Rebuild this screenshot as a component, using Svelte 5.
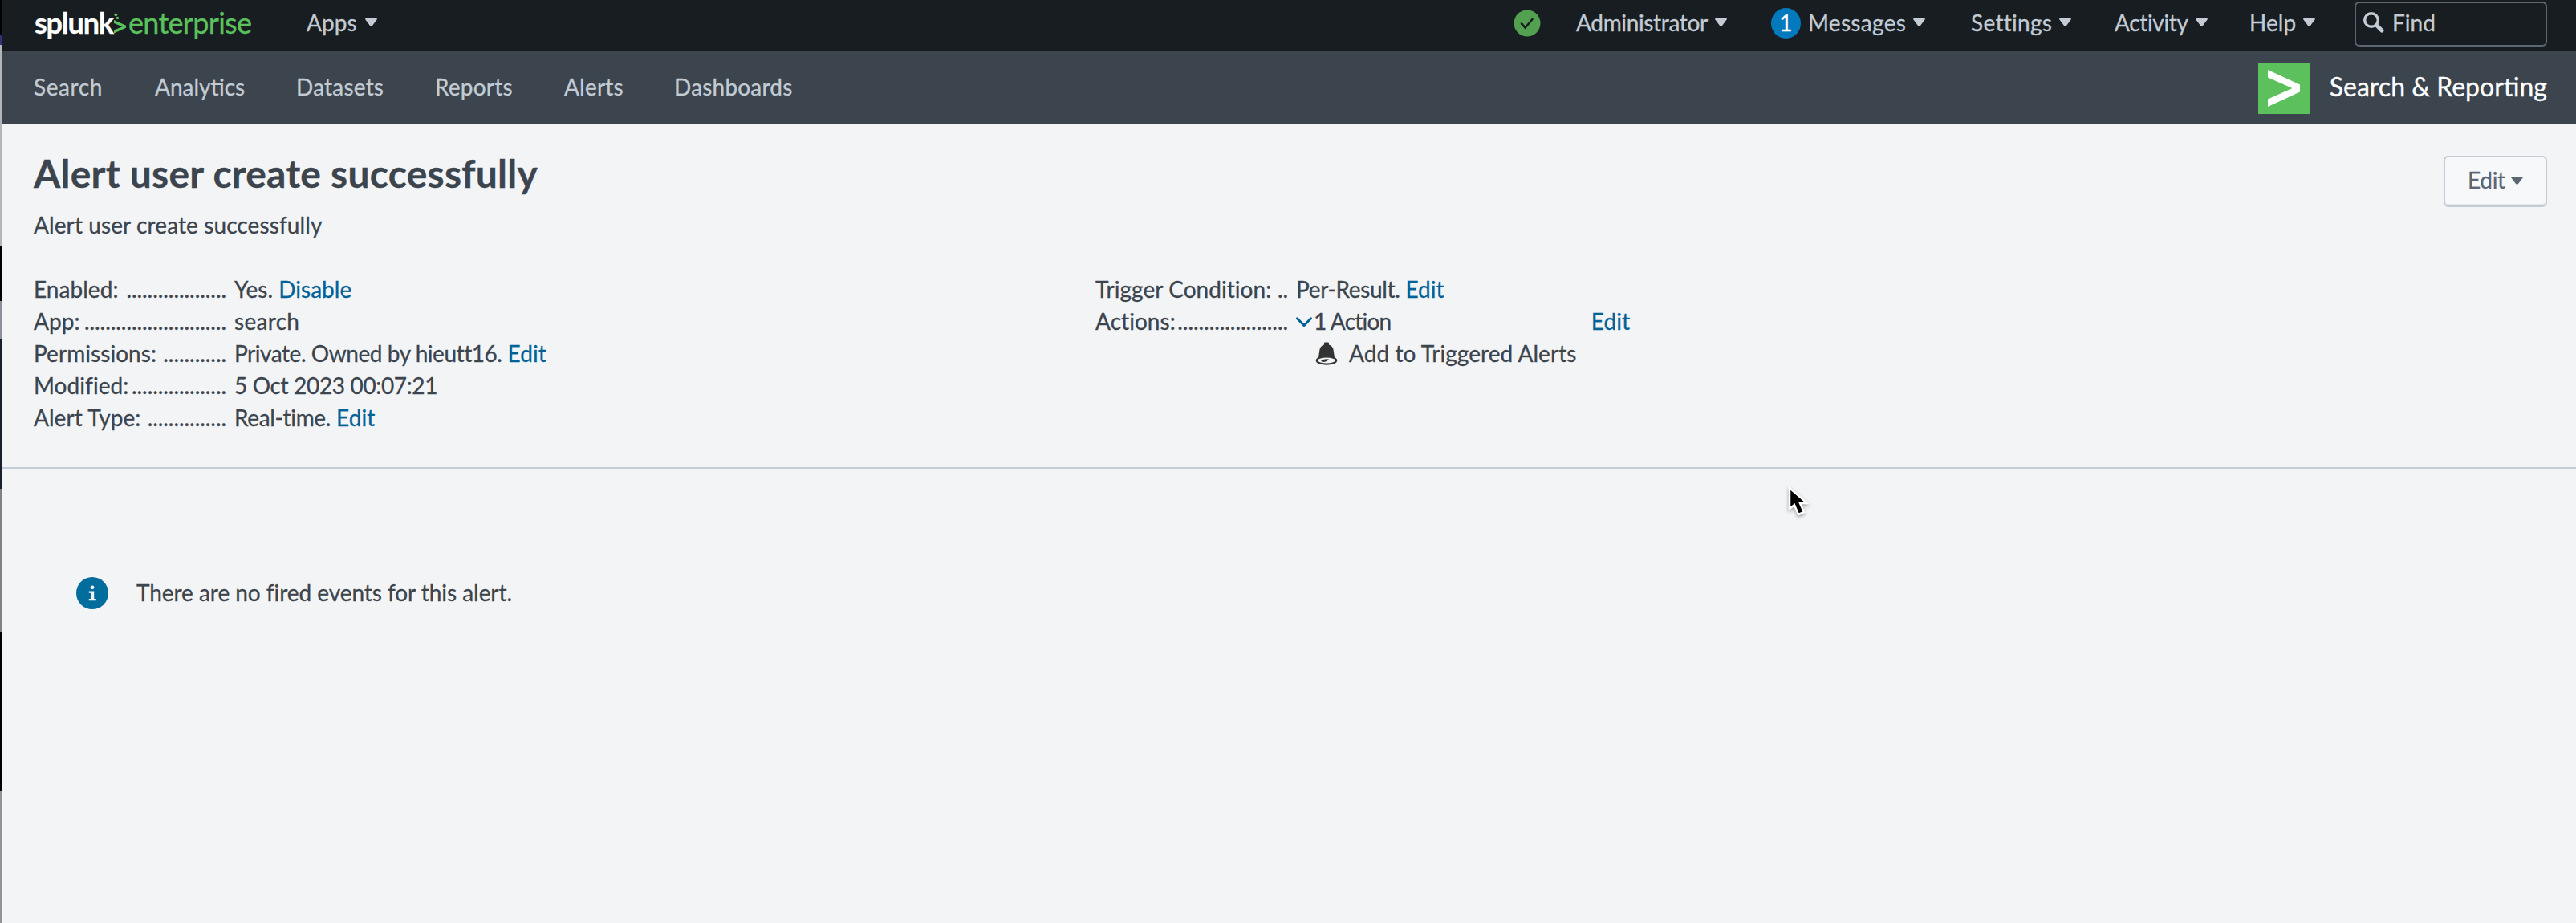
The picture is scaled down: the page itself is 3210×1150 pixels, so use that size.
<script>
  const menus = [
    { label: 'Administrator', cls: 'tighter' },
    { label: 'Messages', badge: 1, cls: 'loose' },
    { label: 'Settings', cls: 'loose' },
    { label: 'Activity', cls: 'tighter' },
    { label: 'Help' },
  ];
  const nav = ['Search', 'Analytics', 'Datasets', 'Reports', 'Alerts', 'Dashboards'];
  const leader = (n) => '.'.repeat(n);
  const details = [
    { label: 'Enabled:', dots: 19, value: 'Yes.', link: 'Disable' },
    { label: 'App:', dots: 27, value: 'search', cls: 'loose' },
    { label: 'Permissions:', dots: 12, value: 'Private. Owned by hieutt16.', link: 'Edit', cls: 'tightest' },
    { label: 'Modified:', dots: 18, value: '5 Oct 2023 00:07:21', cls: 'tighter' },
    { label: 'Alert Type:', dots: 15, value: 'Real-time.', link: 'Edit', cls: 'tighter' },
  ];
</script>

{#snippet caret()}
  <svg class="caret" viewBox="0 0 15 10"><path d="M1 0h13q1.500 0 .600 1.500L9 9q-1.500 1.600-3 0L.400 1.500Q-.500 0 1 0z" /></svg>
{/snippet}

<div class="window">
  <header class="topbar">
    <div class="logo">
      <span class="splunk">splunk</span>
      <svg class="prompt" viewBox="0 0 15 26">
        <path d="M0 9l15 6.800v3L0 25.500v-4l10.500-4.200L0 13z" />
        <circle cx="2.300" cy="2.300" r="1.900" /><circle cx="4.500" cy="6.500" r="1.700" />
      </svg>
      <span class="enterprise">enterprise</span>
    </div>
    <div class="menu apps"><span>Apps</span>{@render caret()}</div>
    <div class="tools">
      <svg class="health" viewBox="0 0 34 34">
        <circle cx="17" cy="17" r="16.500" />
        <path d="M10 17.500l4.600 5L23.500 12" />
      </svg>
      {#each menus as m}
        <div class="menu">
          {#if m.badge}<b class="badge">{m.badge}</b>{/if}
          <span class={m.cls}>{m.label}</span>{@render caret()}
        </div>
      {/each}
      <div class="find">
        <svg viewBox="0 0 26 26"><circle cx="10" cy="10" r="8.300" /><path d="M17 17l6 6" /></svg>
        <span>Find</span>
      </div>
    </div>
  </header>

  <nav class="appbar">
    <div class="links">
      {#each nav as item}<span>{item}</span>{/each}
    </div>
    <div class="app">
      <svg viewBox="0 0 64 64"><path d="M12 9l40 18.500v9L12 55v-9.500L42.500 32 12 18.500z" /></svg>
      <span>Search &amp; Reporting</span>
    </div>
  </nav>

  <main>
    <section class="summary">
      <div class="heading">
        <div>
          <h1>Alert user create successfully</h1>
          <p>Alert user create successfully</p>
        </div>
        <button>Edit{@render caret()}</button>
      </div>
      <div class="columns">
        <div class="details">
          {#each details as d}
            <div class="row">
              <div class="label">{d.label}<i>{leader(d.dots)}</i></div>
              <div><span class={d.cls}>{d.value}</span>{#if d.link}<a href="#edit">{d.link}</a>{/if}</div>
            </div>
          {/each}
        </div>
        <div class="details">
          <div class="row">
            <div class="label">Trigger Condition:<i>{leader(2)}</i></div>
            <div><span class="tighter">Per-Result.</span><a href="#edit">Edit</a></div>
          </div>
          <div class="row">
            <div class="label">Actions:<i>{leader(21)}</i></div>
            <div class="actions">
              <svg class="chevron" viewBox="0 0 20 14"><path d="M1.500 1.800L10 10.500l8.500-8.700" /></svg>
              <span class="one">1 Action</span>
              <a href="#edit">Edit</a>
            </div>
          </div>
          <div class="row triggered">
            <svg class="bell" viewBox="0 0 28 29">
              <path class="body" d="M11 3.500V1.500Q11 .500 12 .500h4Q17 .500 17 1.500V3.500Q22 4.800 22.700 10.500L24 19.500 27 23H1l3-3.500L5.300 10.500Q6 4.800 11 3.500z" />
              <ellipse class="rim" cx="14" cy="23" rx="12.200" ry="4.600" />
              <path class="body" d="M7 23Q12 20.500 17 21.500 14 25.500 8.500 24.800z" />
            </svg>
            <span>Add to Triggered Alerts</span>
          </div>
        </div>
      </div>
    </section>
    <section class="notice">
      <svg viewBox="0 0 40 40">
        <circle cx="20" cy="20" r="20" />
        <circle class="mark" cx="20" cy="12.800" r="2.400" />
        <path class="mark" d="M15.800 17.500h6.400V27h2.600v2.300h-9V27h2.700v-7.200h-2.700z" />
      </svg>
      <span>There are no fired events for this alert.</span>
    </section>
  </main>

  <svg class="cursor" viewBox="0 0 28 42">
    <path d="M3 3v26l6-5 5 12 7-3-5-11h9z" />
  </svg>
</div>

<style>
  :global(body) { background: #f2f4f6; }
  .window {
    box-sizing: border-box;
    position: relative;
    width: 3210px;
    height: 1150px;
    overflow: hidden;
    padding-left: 2px;
    /* sliver of the desktop that shows beside the window */
    background: linear-gradient(#000 43px, #337 43px 56px, #b4b5b7 56px 306px, #000 306px 375px, #8b919c 375px 422px, #18202b 422px 609px, #808183 609px 787px, #000 787px 985px, #929395 985px);
    font: 28px/40px Lato, "Liberation Sans", sans-serif;
    color: #3c444d;
    letter-spacing: 0.05px;
    -webkit-text-stroke: 0.3px currentColor;
  }
  .topbar {
    box-sizing: border-box;
    display: flex;
    height: 64px;
    padding: 0 36px 0 41px;
    background: #171d21;
    color: #c3cbd4;
  }
  .logo { display: flex; width: 339px; padding-top: 8px; font-size: 36px; }
  .splunk { width: 99px; font-weight: 700; letter-spacing: -1.200px; color: #fff; }
  .prompt { width: 15px; height: 26px; margin-top: 8px; fill: #5cc05c; }
  .enterprise { margin-left: 3px; letter-spacing: -0.7px; color: #5cc05c; }
  .menu { display: flex; gap: 9px; height: 40px; padding-top: 8px; }
  .apps { width: 88px; justify-content: space-between; }
  .caret { width: 15px; height: 10px; margin-top: 15px; fill: currentColor; }
  .tools {
    display: grid;
    grid-template-columns: 78px 243px 249px 179px 168px 131px 240px;
    margin-left: auto;
  }
  .health { width: 34px; height: 34px; margin-top: 12px; }
  .health circle { fill: #53a051; }
  .health path { fill: none; stroke: #171d21; stroke-width: 2.600; stroke-linecap: round; }
  .badge {
    width: 37px;
    height: 38px;
    margin-top: 2px;
    border-radius: 50%;
    background: #007abd;
    color: #fff;
    font-weight: 400;
    line-height: 37px;
    text-align: center;
  }
  .find {
    box-sizing: border-box;
    display: flex;
    height: 56px;
    margin-top: 2px;
    padding: 4px 9px;
    border: 2px solid #5c6773;
    border-radius: 6px;
  }
  .find svg { width: 26px; height: 26px; margin: 7px 10px 0 0; fill: none; stroke: #c3cbd4; stroke-width: 3.400; stroke-linecap: round; }
  .find path { stroke-width: 5; }
  .appbar {
    box-sizing: border-box;
    display: flex;
    align-items: center;
    justify-content: space-between;
    height: 90px;
    padding: 0 36px 0 40px;
    background: #3c444d;
    color: #c3cbd4;
  }
  .links { display: grid; grid-template-columns: 151px 176px 173px 161px 137px auto; margin-bottom: 2px; letter-spacing: 0.2px; }
  .links span:first-child { letter-spacing: 0.6px; }
  .links span:nth-child(2) { letter-spacing: 0; }
  .app { display: flex; align-items: center; gap: 25px; margin-top: 2px; font-size: 32px; letter-spacing: 0; color: #fff; }
  .app svg { width: 64px; height: 64px; background: #5cc05c; fill: #fff; }
  .app span { margin-top: -4px; }
  main { height: 996px; background: #f2f4f6; }
  .summary {
    box-sizing: border-box;
    height: 430px;
    padding: 40px 36px 0 40px;
    border-bottom: 2px solid #c3cbd4;
  }
  .heading { display: flex; justify-content: space-between; height: 146px; }
  h1 { margin: -7px 0 0; font-size: 48px; line-height: 58px; font-weight: 700; letter-spacing: 0.25px; }
  p { margin: 15px 0 0; letter-spacing: 0.1px; }
  button {
    display: flex;
    box-sizing: border-box;
    width: 129px;
    height: 64px;
    padding: 8px 0 0 28px;
    gap: 7px;
    border: 2px solid #c3cbd4;
    border-radius: 6px;
    background: #f7f8fa;
    box-shadow: inset 0 -2px #e1e4e8;
    font: inherit;
    letter-spacing: -0.3px;
    color: #5c6773;
  }
  button .caret { margin-top: 16px; }
  .columns { display: grid; grid-template-columns: 1323px auto; justify-content: start; }
  .row { display: grid; grid-template-columns: 240px auto; column-gap: 10px; height: 40px; white-space: nowrap; }
  .label { display: flex; justify-content: space-between; }
  i { font-style: normal; letter-spacing: -0.05px; }
  a { margin-left: 7px; color: #006297; text-decoration: none; }
  .loose { letter-spacing: 0.3px; }
  .tighter { letter-spacing: -0.35px; }
  .tightest { letter-spacing: -0.45px; }
  .actions { display: flex; width: 416px; }
  .actions a { margin-left: auto; }
  .chevron { width: 20px; height: 14px; margin: 15px 2px 0 0; fill: none; stroke: #006297; stroke-width: 3; stroke-linecap: round; }
  .one { letter-spacing: -0.8px; }
  .triggered { grid-template-columns: 28px auto; column-gap: 14px; padding-left: 274px; }
  .bell { width: 28px; height: 29px; margin-top: 6px; }
  .bell .body { fill: #333; }
  .rim { fill: #f2f4f6; stroke: #333; stroke-width: 2.200; }
  .notice { display: flex; gap: 35px; padding: 135px 0 0 93px; letter-spacing: -0.05px; }
  .notice svg { width: 40px; height: 40px; fill: #006d9c; }
  .notice .mark { fill: #f2f4f6; }
  .notice span { margin-top: -1px; }
  .cursor {
    position: absolute;
    left: 2227px;
    top: 605px;
    width: 28px;
    height: 42px;
    stroke: #fff;
    stroke-width: 2.500;
    filter: drop-shadow(0 2px 2px rgb(0 0 0 / 35%));
  }
</style>
